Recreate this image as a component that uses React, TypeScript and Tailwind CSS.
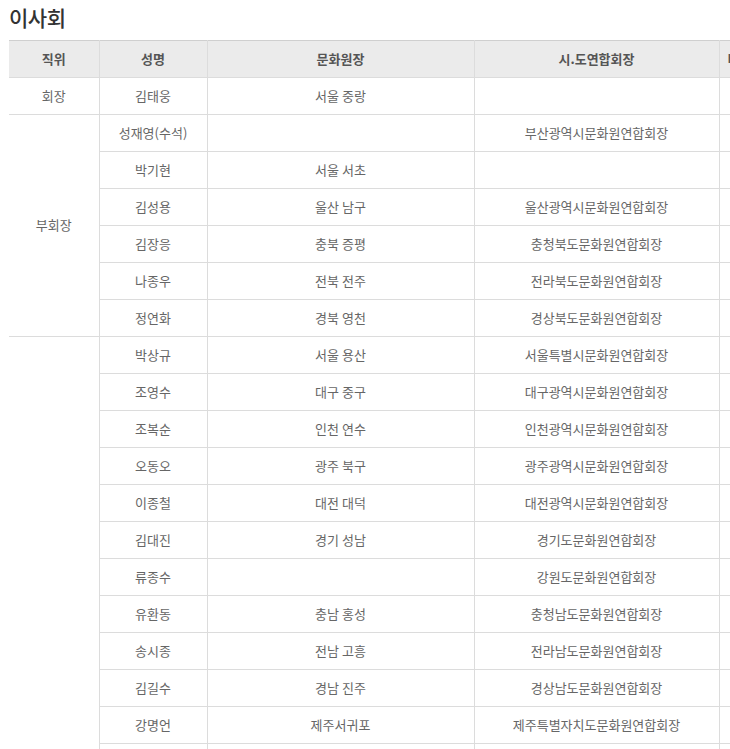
import React from "react";

type Row = { pos?: string; span?: number; name: string; center: string; union: string };

const rows: Row[] = [
  { pos: "회장", span: 1, name: "김태웅", center: "서울 중랑", union: "" },
  { pos: "부회장", span: 6, name: "성재영(수석)", center: "", union: "부산광역시문화원연합회장" },
  { name: "박기현", center: "서울 서초", union: "" },
  { name: "김성용", center: "울산 남구", union: "울산광역시문화원연합회장" },
  { name: "김장응", center: "충북 증평", union: "충청북도문화원연합회장" },
  { name: "나종우", center: "전북 전주", union: "전라북도문화원연합회장" },
  { name: "정연화", center: "경북 영천", union: "경상북도문화원연합회장" },
  { pos: "", span: 12, name: "박상규", center: "서울 용산", union: "서울특별시문화원연합회장" },
  { name: "조영수", center: "대구 중구", union: "대구광역시문화원연합회장" },
  { name: "조복순", center: "인천 연수", union: "인천광역시문화원연합회장" },
  { name: "오동오", center: "광주 북구", union: "광주광역시문화원연합회장" },
  { name: "이종철", center: "대전 대덕", union: "대전광역시문화원연합회장" },
  { name: "김대진", center: "경기 성남", union: "경기도문화원연합회장" },
  { name: "류종수", center: "", union: "강원도문화원연합회장" },
  { name: "유환동", center: "충남 홍성", union: "충청남도문화원연합회장" },
  { name: "송시종", center: "전남 고흥", union: "전라남도문화원연합회장" },
  { name: "김길수", center: "경남 진주", union: "경상남도문화원연합회장" },
  { name: "강명언", center: "제주서귀포", union: "제주특별자치도문화원연합회장" },
  { name: "", center: "", union: "" },
];

const font = { fontFamily: '"Noto Sans CJK KR", "Noto Sans", sans-serif' };

export default function App() {
  return (
    <div className="w-[730px] h-[749px] overflow-hidden bg-white" style={font}>
      <div className="pl-[9px]">
        <h2 className="h-[40px] pt-[1px] text-[21px] leading-[32px] font-medium text-[#333] tracking-[-0.5px]">이사회</h2>
        <table className="table-fixed border-collapse w-[820px] text-[13px] text-[#666]">
          <colgroup>
            <col className="w-[90px]" />
            <col className="w-[108px]" />
            <col className="w-[267px]" />
            <col className="w-[245px]" />
            <col className="w-[110px]" />
          </colgroup>
          <thead>
            <tr className="bg-[#ebebeb] border-t border-[#cfcfcf]">
              <th className="h-[37px] p-0 font-bold text-[#555] border-b border-[#dcdcdc]">직위</th>
              <th className="h-[37px] p-0 font-bold text-[#555] border-b border-l border-[#dcdcdc]">성명</th>
              <th className="h-[37px] p-0 font-bold text-[#555] border-b border-l border-[#dcdcdc]">문화원장</th>
              <th className="h-[37px] p-0 font-bold text-[#555] border-b border-l border-[#dcdcdc]">시.도연합회장</th>
              <th className="h-[37px] p-0 font-bold text-[#555] border-b border-l border-[#dcdcdc] text-left pl-[8px]">비고</th>
            </tr>
          </thead>
          <tbody>
            {rows.map((r, i) => (
              <tr key={i}>
                {r.span !== undefined && (
                  <td rowSpan={r.span} className="p-0 pb-[1px] text-center align-middle border-b border-[#dcdcdc]">
                    {r.pos}
                  </td>
                )}
                <td className="h-[37px] p-0 pb-[1px] text-center border-b border-l border-[#dcdcdc]">{r.name}</td>
                <td className="h-[37px] p-0 pb-[1px] text-center border-b border-l border-[#dcdcdc]">{r.center}</td>
                <td className="h-[37px] p-0 pb-[1px] text-center border-b border-l border-[#dcdcdc]">{r.union}</td>
                <td className="h-[37px] p-0 pb-[1px] text-center border-b border-l border-[#dcdcdc]"></td>
              </tr>
            ))}
          </tbody>
        </table>
      </div>
    </div>
  );
}
